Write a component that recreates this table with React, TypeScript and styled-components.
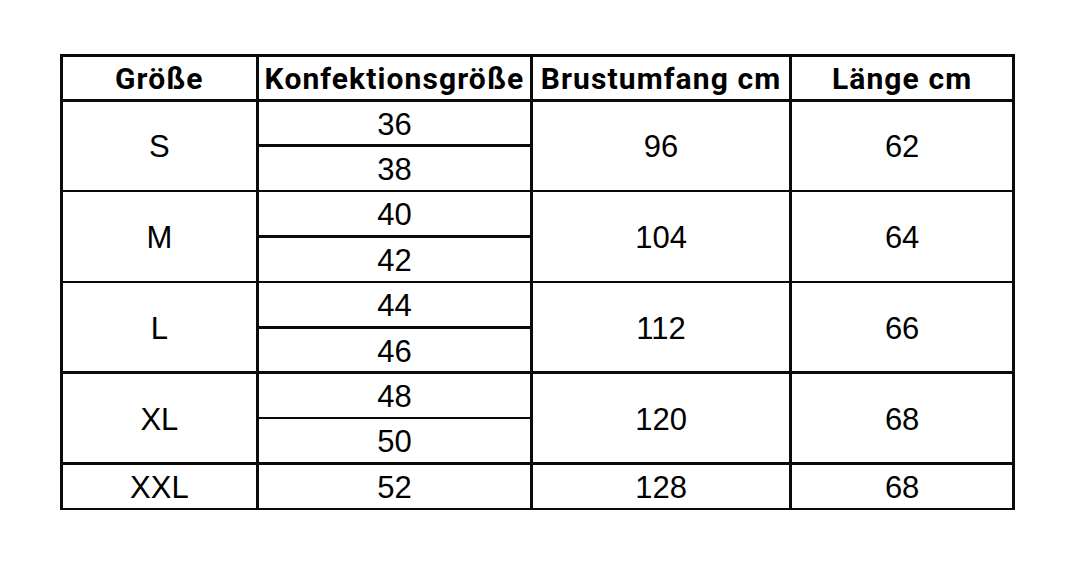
import React from "react";
import styled, { createGlobalStyle } from "styled-components";

const Global = createGlobalStyle`
  html, body { margin: 0; padding: 0; background: #ffffff; }
`;

const Page = styled.div`
  padding: 54px 0 0 60px;
  width: 1075px;
  height: 568px;
  box-sizing: border-box;
  background: #ffffff;
`;

const Grid = styled.div`
  display: grid;
  grid-template-columns: 193.5px 271.5px 256.5px 220.5px;
  grid-template-rows: 42.5px repeat(9, 42.8px);
  gap: 2.6px;
  padding: 2.6px;
  background: #0a0a0a;
  width: max-content;
`;

const Cell = styled.div<{ $head?: boolean; $span?: number }>`
  background: #ffffff;
  display: flex;
  align-items: center;
  justify-content: center;
  color: #000;
  white-space: nowrap;
  grid-row: ${(p) => (p.$span ? `span ${p.$span}` : "auto")};
  font-family: ${(p) =>
    p.$head ? `Roboto, "Liberation Sans", sans-serif` : `"Liberation Sans", Arial, sans-serif`};
  font-weight: ${(p) => (p.$head ? 700 : 400)};
  font-size: ${(p) => (p.$head ? "30px" : "31px")};
  letter-spacing: ${(p) => (p.$head ? "1.1px" : "0")};
  padding-top: ${(p) => (p.$head ? "1px" : "3px")};
  box-sizing: border-box;
`;

type Group = { size: string; konf: string[]; brust: string; laenge: string };

const groups: Group[] = [
  { size: "S", konf: ["36", "38"], brust: "96", laenge: "62" },
  { size: "M", konf: ["40", "42"], brust: "104", laenge: "64" },
  { size: "L", konf: ["44", "46"], brust: "112", laenge: "66" },
  { size: "XL", konf: ["48", "50"], brust: "120", laenge: "68" },
  { size: "XXL", konf: ["52"], brust: "128", laenge: "68" },
];

export default function App() {
  const cells: React.ReactNode[] = [];
  groups.forEach((g) => {
    const n = g.konf.length;
    cells.push(
      <Cell key={g.size + "s"} $span={n}>
        {g.size}
      </Cell>
    );
    g.konf.forEach((k, i) => {
      cells.push(<Cell key={g.size + "k" + k}>{k}</Cell>);
      if (i === 0) {
        cells.push(
          <Cell key={g.size + "b"} $span={n}>
            {g.brust}
          </Cell>
        );
        cells.push(
          <Cell key={g.size + "l"} $span={n}>
            {g.laenge}
          </Cell>
        );
      }
    });
  });
  return (
    <>
      <Global />
      <Page>
        <Grid>
          <Cell $head>Größe</Cell>
          <Cell $head>Konfektionsgröße</Cell>
          <Cell $head>Brustumfang cm</Cell>
          <Cell $head>Länge cm</Cell>
          {cells}
        </Grid>
      </Page>
    </>
  );
}
